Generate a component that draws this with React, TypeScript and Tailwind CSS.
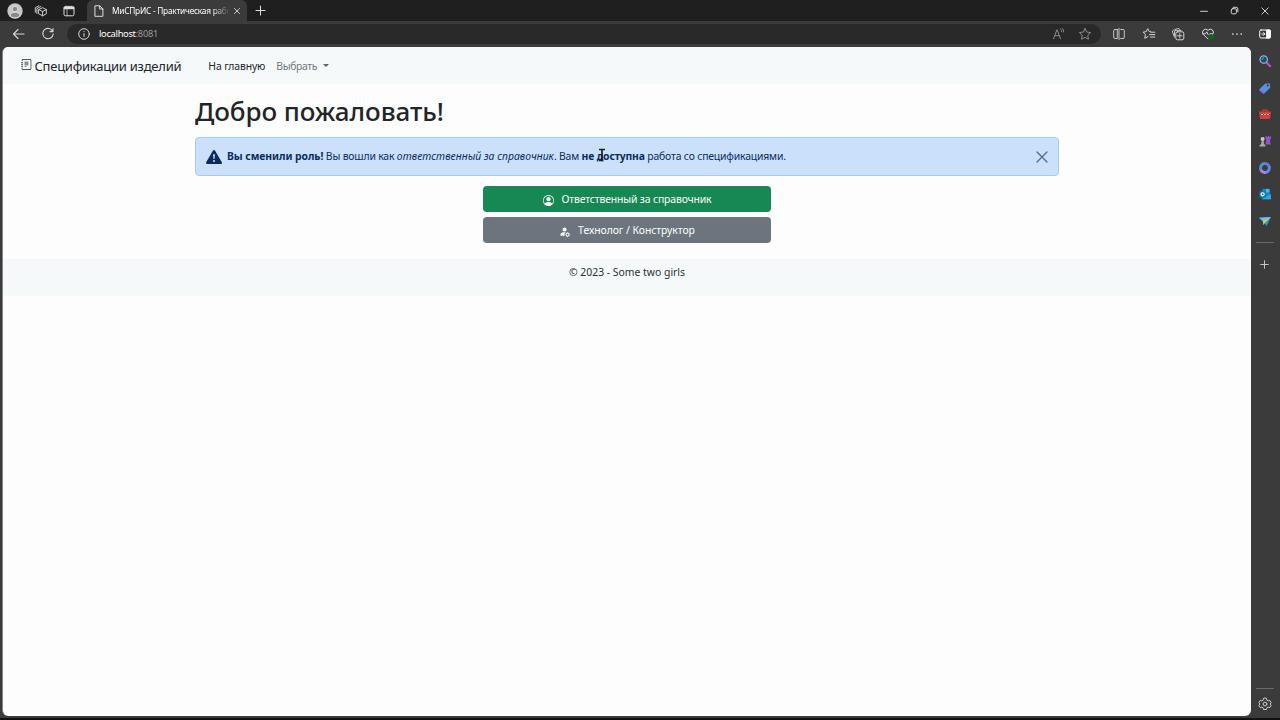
import type { ReactNode } from 'react';
import { BsExclamationTriangleFill, BsJournalText, BsPersonCircle, BsPersonFillGear } from 'react-icons/bs';

function Icon({ size = 14, className = '', children }: { size?: number; className?: string; children: ReactNode }) {
  return (
    <svg
      width={size}
      height={size}
      viewBox="0 0 14 14"
      fill="none"
      stroke="currentColor"
      strokeLinecap="round"
      strokeLinejoin="round"
      className={'block shrink-0 ' + className}
    >
      {children}
    </svg>
  );
}

function TitleBar() {
  return (
    <div className="flex h-[21px] items-center bg-[#1f1f1f] text-[#dedede]">
      <svg viewBox="0 0 16 16" className="ml-[7px] block h-4 w-4 shrink-0">
        <circle cx="8" cy="8" r="7.7" fill="#c9c7c5" />
        <circle cx="8" cy="6" r="2.7" fill="#8b8886" stroke="#f0eeec" strokeWidth=".7" />
        <path d="M3.2 13.2c0-2.8 2-3.9 4.800-3.900s4.800 1.100 4.800 3.900A7 7 0 0 1 8 14.800a7 7 0 0 1-4.800-1.600Z" fill="#8b8886" stroke="#f0eeec" strokeWidth=".7" />
      </svg>
      <Icon className="ml-[11px]">
        <path d="M4.8 5.6 8.6 3.700l3.700 1.900v4.200l-3.700 2-3.800-2ZM4.800 5.600l3.800 1.900 3.700-1.900M8.600 7.500v4.300M2.900 9.400V4.600l4-2.100M1.300 8.200V3.700l3.600-1.900" strokeWidth=".9" />
      </Icon>
      <Icon className="ml-[14px]">
        <rect x="2" y="2.400" width="10" height="9.400" rx="1.500" />
        <path d="M2.300 3.600h9.400M2.300 4.600h9.400" strokeWidth="1.300" />
        <path d="M5 5v6.500" strokeWidth=".7" />
      </Icon>
      <div className="ml-[11px] flex h-[21px] w-[160px] items-center self-end rounded-t-[6px] bg-[#3b3b3b]">
        <Icon className="ml-[5px]">
          <path d="M3.300 1.800h4.400l3.200 3.200v7.300H3.300ZM7.700 1.800V5h3.200" />
        </Icon>
        <div className="ml-[6px] w-[117px] whitespace-nowrap text-[8.3px] leading-[14px] tracking-[-0.24px] text-white [mask-image:linear-gradient(to_right,black_100px,transparent_118px)]">
          МиСПрИС - Практическая рабо
        </div>
        <Icon size={8} className="ml-[4px]">
          <path d="m2.500 2.500 9 9M11.500 2.500l-9 9" strokeWidth="1.500" />
        </Icon>
      </div>
      <Icon size={11} className="ml-[8px]">
        <path d="M7 1.200v11.600M1.200 7h11.600" strokeWidth="1.300" />
      </Icon>
      <div className="ml-auto flex items-center">
        <Icon size={8}>
          <path d="M1 7.500h12" strokeWidth="1.600" />
        </Icon>
        <Icon size={9} className="ml-[22px]">
          <rect x="2" y="4.200" width="8" height="8" rx="2" strokeWidth="1.500" />
          <path d="M5 2h4.500A2.700 2.700 0 0 1 12.200 4.700V9" strokeWidth="1.500" />
        </Icon>
        <Icon size={8} className="mr-[11px] ml-[22px]">
          <path d="m1.500 1.500 11 11M12.500 1.500l-11 11" strokeWidth="1.600" />
        </Icon>
      </div>
    </div>
  );
}

function Toolbar() {
  return (
    <div className="flex h-[25px] items-center bg-[#3b3b3b] text-[#d6d6d6]">
      <Icon className="ml-[12px]">
        <path d="M12 7H1.500M6 2.500 1.500 7 6 11.500" strokeWidth="1.100" />
      </Icon>
      <Icon className="ml-[15px]">
        <path d="M11.700 4.300A5.200 5.200 0 1 0 12.200 7M12 1.600v3H9" strokeWidth="1.100" />
      </Icon>
      <div className="ml-[12px] flex h-5 w-[1034px] items-center rounded-full bg-[#292929]">
        <Icon className="ml-[10px]">
          <circle cx="7" cy="7" r="5.300" />
          <path d="M7 6.500v3M7 4.400v.1" />
        </Icon>
        <div className="ml-[8px] text-[9.300px] tracking-[-0.290px] text-white">
          localhost<span className="text-[#9b9b9b]">:8081</span>
        </div>
        <div className="mr-[9px] ml-auto flex items-center gap-[12px] text-[#8b8b8b]">
          <Icon>
            <path d="m1.500 11.700 3.500-9 3.500 9M2.800 8.700h4.400M8.700 2.300c.8.600 1.100 1.500.9 2.400M10.300 1.500c1.200 1 1.600 2.200 1.200 3.500" strokeWidth="1" />
          </Icon>
          <Icon>
            <path d="m7 1.500 1.700 3.500 3.900.6-2.800 2.700.6 3.900L7 10.400l-3.400 1.800.6-3.900-2.800-2.700 3.900-.6Z" />
          </Icon>
        </div>
      </div>
      <div className="ml-[11px] flex items-center gap-[15.500px]">
        <Icon>
          <path d="M5.300 2.500H3a1.300 1.300 0 0 0-1.300 1.300v6.400A1.300 1.300 0 0 0 3 11.500h2.300V2.500ZM8.700 2.500H11a1.300 1.300 0 0 1 1.300 1.300v6.400a1.300 1.300 0 0 1-1.300 1.300H8.700M7 1.300v11.400" strokeWidth=".9" />
        </Icon>
        <Icon>
          <path d="M8.600 4.700 7.300 4.500 5.700 1.700 4.200 4.700l-3.100.5 2.300 2.300-.6 3.800 3.200-1.700M8.800 5.200h4M7.500 7.600h5.300M8.500 10h4.300" strokeWidth="1" />
        </Icon>
        <Icon>
          <rect x="4.800" y="4.800" width="8" height="8" rx="1.700" />
          <path d="M8.800 6.500v4.600M6.500 8.800h4.600M3.500 10.200 1.600 5.200a1.500 1.500 0 0 1 .9-2L6.600 1.600a1.500 1.500 0 0 1 2 .9l.3.900M3.500 8.500V5a1.600 1.600 0 0 1 1.600-1.600H10" strokeWidth=".9" />
        </Icon>
        <Icon>
          <path d="M7 12 2.300 7.300a3 3 0 0 1 4.700-4 3 3 0 0 1 4.700 4M1.500 6.800h3l1.300-2 1.800 3.700 1.200-1.700h3" strokeWidth="1" />
          <rect x="7" y="7.500" width="6" height="5" rx=".7" fill="#13631f" stroke="none" />
        </Icon>
        <Icon>
          <path d="M2.800 7h.1M7 7h.1M11.200 7h.1" strokeWidth="1.700" />
        </Icon>
        <Icon className="-ml-[2px] text-white">
          <rect x="1.700" y="3" width="10.600" height="8" rx="1.400" />
          <path d="M9 3h2.500a1 1 0 0 1 1 1v6a1 1 0 0 1-1 1H9Z" fill="currentColor" />
          <path d="M3.700 7h3M5.500 5.600 6.900 7 5.500 8.400" strokeWidth=".9" />
        </Icon>
      </div>
    </div>
  );
}

function Sidebar() {
  return (
    <aside className="flex w-[29px] shrink-0 flex-col items-center pt-[8px] pr-[2px] text-[#b9b9b9]">
      <div className="flex flex-col gap-[12.700px]">
        <Icon>
          <path d="m8.700 8.700 3.400 3.400" stroke="#b44fd0" strokeWidth="2.200" />
          <circle cx="5.700" cy="5.500" r="3.700" fill="#174d70" stroke="#9cb9c9" strokeWidth="1.200" />
          <path d="M4 5.500a1.800 1.800 0 0 1 1.700-1.700" stroke="#4aa9de" />
        </Icon>
        <Icon>
          <path d="m1.600 8 5.500-5.200 4.600-.6.700 4.300-5.600 5.600a1.500 1.500 0 0 1-2 0L1.600 9.800a1.300 1.300 0 0 1 0-1.800Z" fill="#5b8fe0" stroke="none" />
          <path d="m2 10 3 2.700 1.700-.3L2.500 8.500Z" fill="#8860d9" stroke="none" />
          <circle cx="9.800" cy="4.500" r=".9" fill="#273452" stroke="none" />
        </Icon>
        <Icon>
          <path d="M4.800 5V3h4.400v2" stroke="#b93939" strokeWidth="1.300" />
          <path d="M.9 4.500h12.200L12 12H2Z" fill="#d83b3b" stroke="none" />
          <path d="M1.500 7.500h11" stroke="#a82a2c" />
          <path d="m3 7 1 1 1-1M6 7l1 1 1-1M9 7l1 1 1-1" stroke="#f6c0bb" />
        </Icon>
        <Icon>
          <path d="M7.500 2h1.200v1h1V2h1.500v1h1V2H13v2.700l-1 .7.300 3.600.7 1.600H7.500l.8-5.200-.8-.7Z" fill="#9650cb" stroke="none" />
          <circle cx="4.600" cy="5" r="2" fill="#c9c9c9" stroke="none" />
          <path d="M3.600 6.500h2l.4 3.500 1.500 1.300v1.200H1.500v-1.200L3.200 10Z" fill="#a9a9a9" stroke="none" />
        </Icon>
        <Icon>
          <path d="M5.500 2.700a4.500 4.500 0 0 1 5.700 3.200" stroke="#6878e0" strokeWidth="2.900" />
          <path d="M11.300 6.500a4.500 4.500 0 0 1-4.300 5" stroke="#5b8ce8" strokeWidth="2.900" />
          <path d="M6.500 11.500a4.500 4.500 0 0 1-3.700-3" stroke="#b97be0" strokeWidth="2.900" />
          <path d="M2.600 7.500A4.500 4.500 0 0 1 5 3" stroke="#4a92d6" strokeWidth="2.900" />
        </Icon>
        <Icon>
          <path d="M4.500 1.800h7v5h1.300v5.400H4Z" fill="#1384c9" stroke="none" />
          <path d="M8 2h3.500v3.500H8Z" fill="#39bdea" stroke="none" />
          <path d="M4 12.200 12.800 7v5.200Z" fill="#35a5d8" stroke="none" />
          <rect x="1.500" y="4.200" width="6.300" height="6.300" rx=".8" fill="#087caf" stroke="none" />
          <circle cx="4.600" cy="7.300" r="1.600" stroke="#fff" strokeWidth="1.100" />
        </Icon>
        <Icon>
          <path d="m1 3.800 12-.8-4.500 9-2-3.200Z" fill="#259bdf" stroke="none" />
          <path d="m13 3-7 5.300-5-4.500Z" fill="#66c2ef" stroke="none" />
          <path d="m12.500 3.500-7.700 3.800.7 4 1.400-2.500Z" fill="#f4c440" stroke="none" />
        </Icon>
      </div>
      <div className="mt-[14px] h-px w-[18px] shrink-0 bg-[#696969]" />
      <Icon size={9} className="mt-[17px] text-[#d0d0d0]">
        <path d="M7 1v12M1 7h12" strokeWidth="1.400" />
      </Icon>
      <div className="mt-auto h-px w-[18px] shrink-0 bg-[#696969]" />
      <Icon className="mt-[8px] mb-[7px] text-[#d8d8d8]">
        <path d="m5.600 1.500-.5 1.700-1.300.7-1.600-.5-1.400 2.400L2 7 .8 8.200l1.400 2.400 1.600-.5 1.300.7.500 1.700h2.800l.5-1.700 1.300-.7 1.600.5 1.400-2.400L12 7l1.200-1.200-1.400-2.400-1.600.5-1.300-.7-.5-1.700Z" strokeWidth=".9" />
        <circle cx="7" cy="7" r="1.900" strokeWidth=".9" />
      </Icon>
    </aside>
  );
}

function Navbar() {
  return (
    <nav className="flex h-[37px] items-center bg-[#f5f9fa] pl-[18px] text-[#212529]">
      <BsJournalText className="mb-[2px] h-[11px] w-[11px] shrink-0" />
      <a className="ml-[2.500px] pt-[2px] text-[13px] tracking-[-0.240px] whitespace-nowrap">Спецификации изделий</a>
      <a className="ml-[27px] pt-[2px] text-[10.400px] tracking-[-0.120px] whitespace-nowrap">На главную</a>
      <a className="ml-[11px] pt-[2px] text-[10.400px] tracking-[-0.380px] whitespace-nowrap text-[#73777a]">Выбрать</a>
      <span className="ml-[6px] h-0 w-0 border-x-[3px] border-t-[3px] border-x-transparent border-t-[#5f6365]" />
    </nav>
  );
}

function RoleAlert() {
  return (
    <div className="mt-[8px] flex h-[39px] items-center rounded-[4px] border border-[#a4cbf6] bg-[#cae0fb] pl-[10px] text-[#0b2c5d]">
      <BsExclamationTriangleFill className="h-4 w-4 shrink-0" />
      <p className="ml-[5px] pt-px text-[10.400px] tracking-[-0.170px] whitespace-nowrap">
        <strong className="tracking-[-0.060px]">Вы сменили роль!</strong> Вы вошли как{' '}
        <em className="tracking-[0.030px]">ответственный за справочник</em>. Вам{' '}
        <span className="relative">
          <strong>не доступна</strong>
          <svg viewBox="0 0 10 14" className="absolute -top-[1px] left-[15px] h-[14px] w-[10px]">
            <path d="M2 1.500h2.500l.5.400.5-.4H8M5 2v10M2 12.500h2.500l.5-.4.500.4" stroke="#17202c" strokeWidth="1.700" fill="none" />
          </svg>
        </span>{' '}
        работа со спецификациями.
      </p>
      <Icon size={12} className="mr-[10px] ml-auto text-[#566b85]">
        <path d="m1.200 1.200 11.600 11.600M12.800 1.200 1.200 12.800" strokeWidth="1.500" />
      </Icon>
    </div>
  );
}

export default function App() {
  return (
    <div className="flex h-[720px] w-[1280px] flex-col overflow-hidden border-b-2 border-[#111111] bg-[#3b3b3b] font-['Noto_Sans','Open_Sans',sans-serif]">
      <TitleBar />
      <Toolbar />
      <div className="flex min-h-0 flex-1">
        <main className="mt-px mb-[2px] ml-[2px] w-[1249px] shrink-0 overflow-hidden rounded-[6px] border-l border-[#858585] bg-[#fdfdfd]">
          <Navbar />
          <div className="mx-auto h-[175px] w-[864px] pt-[9px]">
            <h1 className="h-[36px] text-[26px] leading-[36px] font-medium tracking-[-0.060px] whitespace-nowrap text-[#212529]">Добро пожаловать!</h1>
            <RoleAlert />
            <div className="mx-auto mt-[10px] flex w-[288px] flex-col gap-[5px] text-[10.400px] text-white">
              <button className="flex h-[26px] items-center justify-center rounded-[4px] bg-[#178754]">
                <BsPersonCircle className="mt-[2px] h-[11px] w-[11px]" />
                <span className="ml-[8px] pt-px tracking-[-0.140px]">Ответственный за справочник</span>
              </button>
              <button className="flex h-[26px] items-center justify-center rounded-[4px] bg-[#6c757d]">
                <BsPersonFillGear className="mt-[2px] h-[11px] w-[11px]" />
                <span className="ml-[8px] pt-px tracking-[-0.040px]">Технолог / Конструктор</span>
              </button>
            </div>
          </div>
          <footer className="h-[37px] bg-[#f5f9fa] pt-[5px] text-center text-[10.400px] leading-4 text-[#2b2f33]">© 2023 - Some two girls</footer>
        </main>
        <Sidebar />
      </div>
    </div>
  );
}
